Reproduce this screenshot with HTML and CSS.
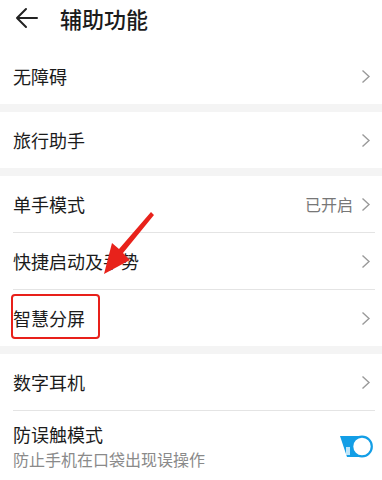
FILE: index.html
```
<!DOCTYPE html>
<html lang="zh-CN">
<head>
<meta charset="utf-8">
<link rel="stylesheet" href="styles.css">
</head>
<body>
<div class="page">
  <header class="header">
    <svg class="back" width="24" height="22" viewBox="0 0 24 22"><path d="M12 2 L3 11 L12 20 M3 11 H23" fill="none" stroke="#222" stroke-width="2" stroke-linecap="round" stroke-linejoin="round"/></svg>
    <h1 class="title">辅助功能</h1>
  </header>

  <section class="group">
    <div class="row"><span class="label">无障碍</span><svg class="chev" width="10" height="15" viewBox="0 0 10 15"><path d="M1.5 1.5 L8 7.5 L1.5 13.5" fill="none" stroke="#9a9a9a" stroke-width="1.4"/></svg></div>
  </section>
  <div class="band"></div>
  <section class="group">
    <div class="row"><span class="label">旅行助手</span><svg class="chev" width="10" height="15" viewBox="0 0 10 15"><path d="M1.5 1.5 L8 7.5 L1.5 13.5" fill="none" stroke="#9a9a9a" stroke-width="1.4"/></svg></div>
  </section>
  <div class="band"></div>
  <section class="group">
    <div class="row"><span class="label">单手模式</span><span class="right"><span class="status">已开启</span><svg class="chev" width="10" height="15" viewBox="0 0 10 15"><path d="M1.5 1.5 L8 7.5 L1.5 13.5" fill="none" stroke="#9a9a9a" stroke-width="1.4"/></svg></span></div>
    <div class="divider"></div>
    <div class="row"><span class="label">快捷启动及手势</span><svg class="chev" width="10" height="15" viewBox="0 0 10 15"><path d="M1.5 1.5 L8 7.5 L1.5 13.5" fill="none" stroke="#9a9a9a" stroke-width="1.4"/></svg></div>
    <div class="divider"></div>
    <div class="row"><span class="label">智慧分屏</span><svg class="chev" width="10" height="15" viewBox="0 0 10 15"><path d="M1.5 1.5 L8 7.5 L1.5 13.5" fill="none" stroke="#9a9a9a" stroke-width="1.4"/></svg></div>
  </section>
  <div class="band"></div>
  <section class="group">
    <div class="row"><span class="label">数字耳机</span><svg class="chev" width="10" height="15" viewBox="0 0 10 15"><path d="M1.5 1.5 L8 7.5 L1.5 13.5" fill="none" stroke="#9a9a9a" stroke-width="1.4"/></svg></div>
    <div class="divider"></div>
    <div class="row tall">
      <div class="texts">
        <span class="label">防误触模式</span>
        <span class="sub">防止手机在口袋出现误操作</span>
      </div>
      <svg class="toggle" width="36" height="24" viewBox="0 0 36 24"><path d="M2 1 H24 V22 H9 Z" fill="#139ee6"/><circle cx="24" cy="11.5" r="9.8" fill="#fff" stroke="#139ee6" stroke-width="2.2"/><rect x="8" y="12" width="4" height="8" fill="#bfe6fa"/></svg>
    </div>
  </section>

  <div class="highlight"></div>
  <svg class="arrow" width="382" height="480" viewBox="0 0 382 480"><polygon points="151,212 154,215 123,253 130,260 104,274 112,243 119,249" fill="#e8221b"/></svg>
</div>
</body>
</html>
```
FILE: styles.css
```
* { box-sizing: border-box; margin: 0; padding: 0; }
html, body { background: #fff; }
body {
  font-family: "Noto Sans CJK SC", "Noto Sans", sans-serif;
  color: #1b1b1b;
  width: 382px;
  height: 480px;
  overflow: hidden;
}
.page { position: relative; width: 382px; height: 480px; }
.header {
  height: 48px;
  display: flex;
  align-items: flex-start;
  padding-left: 14px;
}
.back { margin-top: 7px; }
.title {
  font-size: 22px;
  font-weight: 500;
  line-height: 36px;
  margin-left: 22px;
  color: #1b1b1b;
}
.band { height: 8px; background: #f4f4f4; }
.row {
  height: 56px;
  display: flex;
  align-items: center;
  justify-content: space-between;
  padding: 0 11px 0 13px;
}
.row.tall { height: 70px; }
.label { font-size: 18px; line-height: 26px; }
.right { display: flex; align-items: center; gap: 8px; }
.status { font-size: 16px; color: #777; }
.divider { height: 1px; background: #e4e4e4; margin: 0 7px 0 13px; }
.texts { display: flex; flex-direction: column; }
.sub { font-size: 16px; line-height: 24px; color: #8a8a8a; }
.toggle { margin-right: -3px; margin-top: 1px; }
.highlight {
  position: absolute;
  left: 11px;
  top: 294px;
  width: 89px;
  height: 45px;
  border: 2.5px solid #e8201a;
  border-radius: 4px;
}
.arrow { position: absolute; left: 0; top: 0; pointer-events: none; }
```
